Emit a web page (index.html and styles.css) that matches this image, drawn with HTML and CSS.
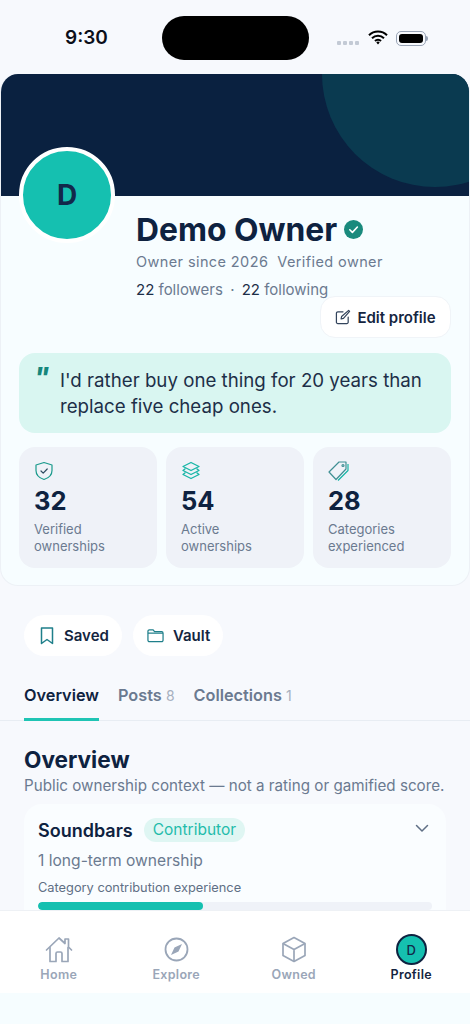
FILE: index.html
```html
<!DOCTYPE html>
<html lang="en">
<head>
    <meta charset="UTF-8">
    <title>Profile</title>
    <link rel="stylesheet" href="styles.css">
</head>
<body>
<div class="app">
    <div class="status">
        <span class="time">9:30</span>
        <span class="island"></span>
        <div class="status-icons">
            <span class="dots"><i></i><i></i><i></i><i></i></span>
            <svg class="wifi" width="20" height="15" viewBox="0 0 20 15"><path d="M1 5.200a12.700 12.700 0 0 1 18 0M4 8.200a8.500 8.500 0 0 1 12 0M7 11a4.200 4.200 0 0 1 6 0" fill="none" stroke="#000" stroke-width="2"/><path d="M8.300 12.400 10 14.400l1.700-2a2.400 2.400 0 0 0-3.400 0z"/></svg>
            <span class="battery"><i></i></span>
        </div>
    </div>

    <div class="scroll">
        <!-- profile card -->
        <section class="card">
            <div class="banner"><span class="banner-circle"></span></div>
            <div class="head">
                <div class="avatar">D</div>
                <div class="who">
                    <h1 class="name">Demo Owner
                        <svg width="19" height="19" viewBox="0 0 19 19"><circle cx="9.500" cy="9.500" r="9.500" fill="#1a8a7d"/><path d="m5.800 9.800 2.600 2.600 5-5.400" fill="none" stroke="#fff" stroke-width="1.600" stroke-linecap="round" stroke-linejoin="round"/></svg>
                    </h1>
                    <p class="since">Owner since 2026&nbsp; Verified owner</p>
                    <p class="follow"><b>22</b> followers <span class="sep">·</span> <b>22</b> following</p>
                </div>
            </div>
            <div class="edit-row">
                <button class="edit">
                    <svg width="16" height="16" viewBox="0 0 17 17" fill="none" stroke="#33445c" stroke-width="1.300" stroke-linecap="round" stroke-linejoin="round"><path d="M8.500 3H3a1.500 1.500 0 0 0-1.500 1.500V14A1.500 1.500 0 0 0 3 15.500h9.500A1.500 1.500 0 0 0 14 14V8.500"/><path d="M6.500 10.500 7 8l7.500-6.500 1 1L9 10z"/></svg>
                    Edit profile
                </button>
            </div>
            <div class="quote">
                <span class="quote-mark">"</span>
                <p>I'd rather buy one thing for 20 years than replace five cheap ones.</p>
            </div>
            <div class="stats">
                <div class="stat">
                    <svg width="20" height="20" viewBox="0 0 20 20" fill="none" stroke="#1a9a8c" stroke-width="1.200" stroke-linecap="round" stroke-linejoin="round"><path d="M10 1.500 2 4v5.500c0 4.500 3.300 7.500 8 9 4.700-1.500 8-4.500 8-9V4z"/><path d="m7 10 2.200 2.200L13.200 8" stroke="#2d4a60"/></svg>
                    <strong>32</strong>
                    <span>Verified<br>ownerships</span>
                </div>
                <div class="stat">
                    <svg width="20" height="20" viewBox="0 0 20 20" fill="none" stroke="#17b5a6" stroke-width="1.300" stroke-linejoin="round"><path d="M10 1.500 18 5.500 10 9.500 2 5.500z"/><path d="M4.500 7.500 2 9.500l8 4 8-4-2.500-2"/><path d="M4.500 11.500 2 13.500l8 4 8-4-2.500-2"/></svg>
                    <strong>54</strong>
                    <span>Active<br>ownerships</span>
                </div>
                <div class="stat">
                    <svg width="22" height="20" viewBox="0 0 22 20" fill="none" stroke="#3f8f93" stroke-width="1.200" stroke-linejoin="round"><path d="M1 11 11 1h7v7L8 18.500z"/><path d="M20 3v6.500L10 19.500" stroke="#17b5a6"/><circle cx="15" cy="4.500" r="1"/></svg>
                    <strong>28</strong>
                    <span>Categories<br>experienced</span>
                </div>
            </div>
        </section>

        <div class="chips">
            <button class="chip">
                <svg class="chip-mark" width="14" height="18" viewBox="0 0 14 18" fill="none" stroke="#1f7f8a" stroke-width="1.500" stroke-linejoin="round"><path d="M1.500 1h11v15.500L7 12.500l-5.500 4z"/></svg>
                Saved
            </button>
            <button class="chip">
                <svg width="17" height="15" viewBox="0 0 18 15" fill="none" stroke="#1f7f8a" stroke-width="1.300" stroke-linejoin="round"><path d="M1 3a1.500 1.500 0 0 1 1.500-1.500h4L8 3.500h7.500A1.500 1.500 0 0 1 17 5v7.500a1.500 1.500 0 0 1-1.500 1.500h-13A1.500 1.500 0 0 1 1 12.500z"/><path d="M1 5h16"/></svg>
                Vault
            </button>
        </div>

        <div class="tabs">
            <a class="tab active">Overview</a>
            <a class="tab">Posts <small>8</small></a>
            <a class="tab">Collections <small>1</small></a>
        </div>

        <section class="overview">
            <h2>Overview</h2>
            <p class="sub">Public ownership context — not a rating or gamified score.</p>
            <div class="item">
                <div class="item-top">
                    <span class="item-name">Soundbars</span>
                    <span class="pill">Contributor</span>
                    <svg class="chev" width="14" height="9" viewBox="0 0 14 9" fill="none" stroke="#5f6f85" stroke-width="1.500" stroke-linecap="round" stroke-linejoin="round"><path d="m1.500 1.500 5.500 5.500 5.500-5.500"/></svg>
                </div>
                <p class="item-line">1 long-term ownership</p>
                <p class="item-label">Category contribution experience</p>
                <div class="bar"><div class="bar-fill" style="width: 42%"></div></div>
            </div>
        </section>
    </div>

    <nav class="nav">
        <a class="nav-item">
            <svg width="28" height="27" viewBox="0 0 28 27" fill="none" stroke="#9aa6b8" stroke-width="1.700" stroke-linecap="round" stroke-linejoin="round"><path d="M1.500 14 14 2l6 5.500V3h3.500v8L26.500 14"/><path d="M5 11.500V25.500h6V17.500a1.500 1.500 0 0 1 1.500-1.500h3a1.500 1.500 0 0 1 1.500 1.500v8h6V11.500"/></svg>
            Home
        </a>
        <a class="nav-item">
            <svg width="25" height="27" viewBox="0 0 25 27" fill="none" stroke="#9aa6b8" stroke-width="1.800"><circle cx="12.500" cy="13.500" r="11"/><path d="m18 8-7.500 3.500L7 19l7.500-3.500z" fill="#9aa6b8" stroke="none"/></svg>
            Explore
        </a>
        <a class="nav-item">
            <svg width="26" height="27" viewBox="0 0 26 27" fill="none" stroke="#9aa6b8" stroke-width="1.700" stroke-linejoin="round"><path d="M13 1.500 24 7.500v12L13 25.500 2 19.500v-12z"/><path d="M2 7.500 13 13.500 24 7.500M13 13.500v12"/></svg>
            Owned
        </a>
        <a class="nav-item current">
            <span class="nav-avatar">D</span>
            Profile
        </a>
    </nav>
    <div class="safe"></div>
</div>
</body>
</html>
```

FILE: styles.css
```css
*{
    margin: 0;
    padding: 0;
    box-sizing: border-box;
}
body{
    background: #f7f9fd;
    font-family: "Inter", "Liberation Sans", sans-serif;
    color: #0e2240;
}
button{
    font-family: inherit;
    border: none;
}
.app{
    width: 470px;
    height: 1024px;
    display: flex;
    flex-direction: column;
    overflow: hidden;
}

/* status bar */
.status{
    height: 74px;
    flex-shrink: 0;
    display: flex;
    align-items: flex-start;
    padding: 16px 41px 0 65px;
}
.time{
    font-size: 19px;
    font-weight: 600;
    line-height: 44px;
    color: #0b0f1a;
    width: 97px;
}
.island{
    width: 147px;
    height: 44px;
    border-radius: 22px;
    background: #000;
}
.status-icons{
    margin-left: auto;
    height: 44px;
    display: flex;
    align-items: center;
    gap: 8px;
}
.dots{
    display: flex;
    gap: 2px;
    margin-top: 9px;
    margin-right: 1px;
}
.dots i{
    width: 4px;
    height: 4px;
    background: #c3cad5;
    border-radius: 1px;
}
.wifi{
    margin-top: -1px;
}
.battery{
    width: 30px;
    height: 15px;
    border: 1px solid #98a3b5;
    border-radius: 5px;
    padding: 2px;
    display: block;
    margin-right: 3px;
    position: relative;
}
.battery i{
    display: block;
    height: 100%;
    background: #000;
    border-radius: 3px;
}
/* little nub on the battery */
.battery::after{
    content: '';
    position: absolute;
    right: -3px;
    top: 4px;
    width: 2px;
    height: 5px;
    background: #98a3b5;
    border-radius: 0 2px 2px 0;
}

.scroll{
    flex: 1;
    min-height: 0;
    overflow: hidden;
}

/* profile card */
.card{
    height: 512px;
    background: #f7fdff;
    border: 1px solid #edf1f6;
    border-top: none;
    border-radius: 18px;
    overflow: hidden;
    padding-bottom: 18px;
}
.banner{
    height: 122px;
    background: #0a2140;
    position: relative;
    overflow: hidden;
    margin: 0 -1px;
}
.banner-circle{
    position: absolute;
    left: 322px;
    top: -113px;
    width: 226px;
    height: 226px;
    border-radius: 50%;
    background: #0a3a50;
}
.head{
    display: flex;
    padding-left: 18px;
    gap: 21px;
}
.avatar{
    width: 96px;
    height: 96px;
    flex-shrink: 0;
    margin-top: -49px;
    border-radius: 50%;
    background: #15c0b0;
    border: 4px solid #fff;
    display: flex;
    align-items: center;
    justify-content: center;
    font-size: 28px;
    font-weight: 700;
    color: #12294a;
    position: relative;
}
.who{
    padding-top: 14px;
}
.name{
    font-size: 31.8px;
    font-weight: 700;
    line-height: 39px;
    display: flex;
    align-items: center;
    gap: 7px;
}
.since{
    font-size: 14.5px;
    line-height: 20px;
    color: #6b7a90;
    margin-top: 3px;
    letter-spacing: 0.4px;
}
.follow{
    font-size: 15px;
    line-height: 20px;
    color: #6b7a90;
    margin-top: 8px;
}
.follow b{
    font-weight: 400;
    color: #1d2f48;
}
.sep{
    margin: 0 3px;
}
.edit-row{
    display: flex;
    justify-content: flex-end;
    padding-right: 18px;
    margin-top: -4px;
}
.edit{
    width: 131px;
    height: 42px;
    background: #fff;
    border-radius: 15px;
    border: 1px solid #f0f4f8;
    display: flex;
    align-items: center;
    justify-content: center;
    gap: 6px;
    font-size: 15px;
    font-weight: 600;
    color: #14253f;
}
.quote{
    margin: 15px 18px 0;
    height: 80px;
    background: #d9f6f1;
    border-radius: 16px;
    display: flex;
    padding: 15px 16px 0;
    gap: 10px;
}
.quote-mark{
    font-size: 26px;
    font-weight: 800;
    font-style: italic;
    line-height: 26px;
    color: #16877c;
    width: 15px;
    margin: -4px 0 0 -1px;
    flex-shrink: 0;
}
.quote p{
    font-size: 18.7px;
    line-height: 26px;
    color: #1d2f48;
    margin-left: 1px;
}
.stats{
    margin: 14px 18px 0;
    display: grid;
    grid-template-columns: repeat(3, 138px);
    gap: 9px;
}
.stat{
    height: 121px;
    background: #eff2f8;
    border-radius: 16px;
    padding: 14px 15px 0;
    display: flex;
    flex-direction: column;
    align-items: flex-start;
}
.stat strong{
    font-size: 25.5px;
    font-weight: 700;
    line-height: 32px;
    margin-top: 4px;
}
.stat span{
    font-size: 13px;
    line-height: 17px;
    color: #6b7a90;
    margin-top: 4px;
}

/* chips */
.chips{
    display: flex;
    gap: 11px;
    padding: 29px 0 0 24px;
}
.chip{
    height: 41px;
    padding: 0 13px 0 14px;
    background: #fff;
    border-radius: 21px;
    display: flex;
    align-items: center;
    gap: 9px;
    font-size: 15px;
    font-weight: 600;
    color: #14253f;
}
.chip-mark{
    margin: 0 1px 0 2px;
}

/* tabs */
.tabs{
    display: flex;
    gap: 19px;
    margin-top: 26px;
    padding-left: 24px;
    border-bottom: 1px solid #e8edf3;
    height: 39px;
}
.tab{
    font-size: 16.3px;
    font-weight: 600;
    line-height: 26px;
    color: #6b7a90;
    height: 39px;
}
.tab small{
    font-size: 14px;
    font-weight: 400;
    color: #a6b0bf;
}
.tab.active{
    color: #0e2240;
    border-bottom: 3px solid #1fc4b4;
}

.overview{
    padding: 24px 24px 0;
}
.overview h2{
    font-size: 22.6px;
    font-weight: 700;
    line-height: 29px;
}
.sub{
    font-size: 15.2px;
    line-height: 18px;
    color: #6b7a90;
    margin-top: 3px;
    white-space: nowrap;
}
.item{
    margin-top: 9px;
    background: #fafdff;
    border-radius: 18px;
    padding: 14px 14px 20px;
}
.item-top{
    display: flex;
    align-items: center;
    height: 24px;
}
.item-name{
    font-size: 18px;
    font-weight: 600;
}
.pill{
    font-size: 15.5px;
    color: #1fbcab;
    background: #dff6f3;
    border-radius: 12px;
    padding: 0 9px;
    line-height: 24px;
    margin-left: 11px;
}
.chev{
    margin: -4px 3px 0 auto;
}
.item-line{
    font-size: 15.6px;
    line-height: 20px;
    color: #6b7a90;
    margin-top: 9px;
}
.item-label{
    font-size: 12.8px;
    line-height: 17px;
    color: #5f6f85;
    margin-top: 8px;
}
.bar{
    height: 8px;
    background: #eff2f8;
    border-radius: 4px;
    margin-top: 6px;
    overflow: hidden;
}
.bar-fill{
    height: 100%;
    background: #15c0b0;
    border-radius: 4px;
}

/* bottom nav */
.nav{
    height: 83px;
    flex-shrink: 0;
    background: #fff;
    border-top: 1px solid #eef1f5;
    display: grid;
    grid-template-columns: repeat(4, 1fr);
    padding-top: 25px;
}
.nav-item{
    display: flex;
    flex-direction: column;
    align-items: center;
    gap: 4px;
    font-size: 12.5px;
    font-weight: 600;
    color: #9aa6b8;
    line-height: 16px;
    letter-spacing: 0.3px;
}
.nav-item svg{
    height: 27px;
}
.nav-item.current{
    color: #14253f;
    margin-top: -2px;
}
.nav-avatar{
    width: 31px;
    height: 31px;
    border-radius: 50%;
    background: #15c0b0;
    border: 2px solid #0e2240;
    display: flex;
    align-items: center;
    justify-content: center;
    font-size: 13px;
    font-weight: 500;
    color: #12294a;
    letter-spacing: 0;
    margin-bottom: -2px;
}
.safe{
    height: 31px;
    flex-shrink: 0;
    background: #f6fdff;
}
```
